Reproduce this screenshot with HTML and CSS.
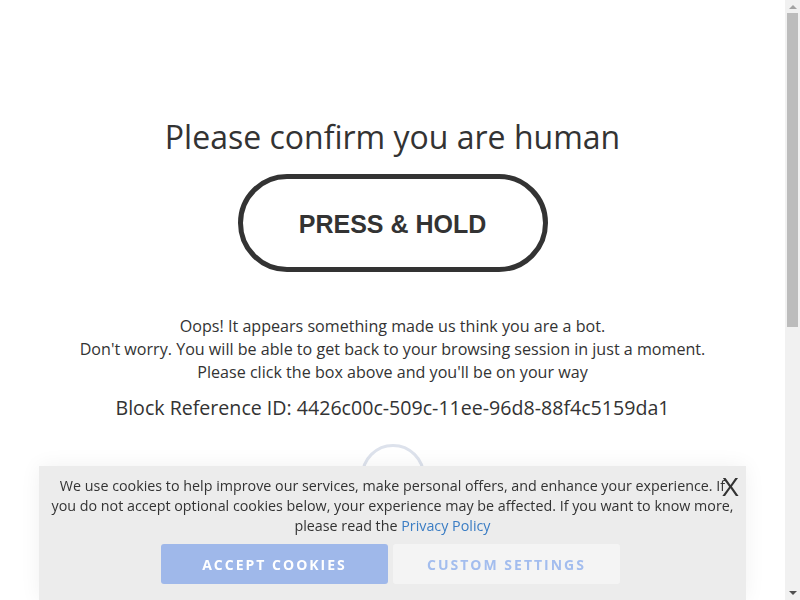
FILE: index.html
```html
<!DOCTYPE html>
<html lang="en">
<head>
<meta charset="utf-8">
<title>Please confirm you are human</title>
<link rel="stylesheet" href="styles.css">
</head>
<body>
<main class="page">
  <h1 class="title">Please confirm you are human</h1>
  <div class="hold-btn">PRESS &amp; HOLD</div>
  <div class="message">
    <p>Oops! It appears something made us think you are a bot.</p>
    <p>Don't worry. You will be able to get back to your browsing session in just a moment.</p>
    <p>Please click the box above and you'll be on your way</p>
  </div>
  <p class="ref">Block Reference ID: 4426c00c-509c-11ee-96d8-88f4c5159da1</p>
  <div class="spinner"></div>
</main>
<div class="cookie-banner">
  <button class="close" type="button">X</button>
  <p class="cookie-text">We use cookies to help improve our services, make personal offers, and enhance your experience. If you do not accept optional cookies below, your experience may be affected. If you want to know more, please read the <a href="#">Privacy Policy</a></p>
  <div class="cookie-actions">
    <button class="btn btn-accept" type="button">Accept Cookies</button>
    <button class="btn btn-custom" type="button">Custom Settings</button>
  </div>
</div>
<div class="scrollbar" aria-hidden="true">
  <span class="arrow arrow-up"></span>
  <span class="thumb"></span>
  <span class="arrow arrow-down"></span>
</div>
</body>
</html>
```

FILE: styles.css
```css
html, body {
  margin: 0;
  padding: 0;
  background: #fff;
}
body {
  font-family: "Open Sans", "Liberation Sans", sans-serif;
  color: #333;
}
.page {
  width: calc(100% - 15px);
  display: flex;
  flex-direction: column;
  align-items: center;
  padding-top: 115px;
  min-height: 1000px;
  padding-bottom: 80px;
}
.title {
  margin: 0;
  font-size: 32px;
  font-weight: 400;
  line-height: 44px;
  color: #333;
}
.hold-btn {
  margin-top: 15px;
  box-sizing: border-box;
  width: 310px;
  height: 98px;
  border: 5px solid #333;
  border-radius: 50px;
  display: flex;
  align-items: center;
  justify-content: center;
  padding-top: 2px;
  font-family: "Liberation Sans", Arial, sans-serif;
  font-weight: 700;
  font-size: 25px;
  color: #333;
}
.message {
  margin-top: 43px;
  text-align: center;
  font-size: 16.1px;
  line-height: 23px;
}
.message p {
  margin: 0;
}
.ref {
  margin: 11px 0 0;
  font-size: 19.6px;
  line-height: 26px;
}
.spinner {
  margin-top: 23px;
  width: 58px;
  height: 58px;
  border: 3px solid #dde2ec;
  border-radius: 50%;
}
.cookie-banner {
  position: fixed;
  left: 39px;
  bottom: 0;
  width: 707px;
  height: 134px;
  box-sizing: border-box;
  background: #ececec;
  box-shadow: 0 0 20px rgba(0, 0, 0, 0.06);
  padding: 10px 11px 0;
  text-align: center;
}
.close {
  position: absolute;
  top: 8px;
  right: 7px;
  border: 0;
  background: none;
  padding: 0;
  font-family: "Liberation Sans", Arial, sans-serif;
  font-size: 26px;
  line-height: 26px;
  color: #333;
  cursor: pointer;
}
.cookie-text {
  margin: 0;
  font-size: 14.3px;
  line-height: 20px;
  color: #333;
}
.cookie-text a {
  color: #3b7dc4;
  text-decoration: none;
}
.cookie-actions {
  display: flex;
  justify-content: center;
  gap: 5px;
  margin-top: 8px;
  padding-right: 4px;
}
.btn {
  width: 227px;
  height: 40px;
  border: 0;
  border-radius: 3px;
  font-family: "Open Sans", sans-serif;
  font-size: 14px;
  font-weight: 700;
  letter-spacing: 2px;
  text-transform: uppercase;
  padding-bottom: 1px;
}
.btn-accept {
  background: #9fb8ea;
  color: #fff;
}
.btn-custom {
  background: #f4f4f4;
  color: #a3bdee;
}
.scrollbar {
  position: fixed;
  top: 0;
  right: 0;
  width: 15px;
  height: 100%;
  background: #f1f1f1;
  display: flex;
  flex-direction: column;
  align-items: center;
}
.arrow {
  width: 0;
  height: 0;
  border-left: 4px solid transparent;
  border-right: 4px solid transparent;
}
.arrow-up {
  margin-top: 5px;
  border-bottom: 4px solid #a3a3a3;
}
.thumb {
  margin-top: 4px;
  width: 11px;
  height: 314px;
  background: #bcbcbc;
}
.arrow-down {
  margin-top: auto;
  margin-bottom: 5px;
  border-top: 4px solid #505050;
}
```
